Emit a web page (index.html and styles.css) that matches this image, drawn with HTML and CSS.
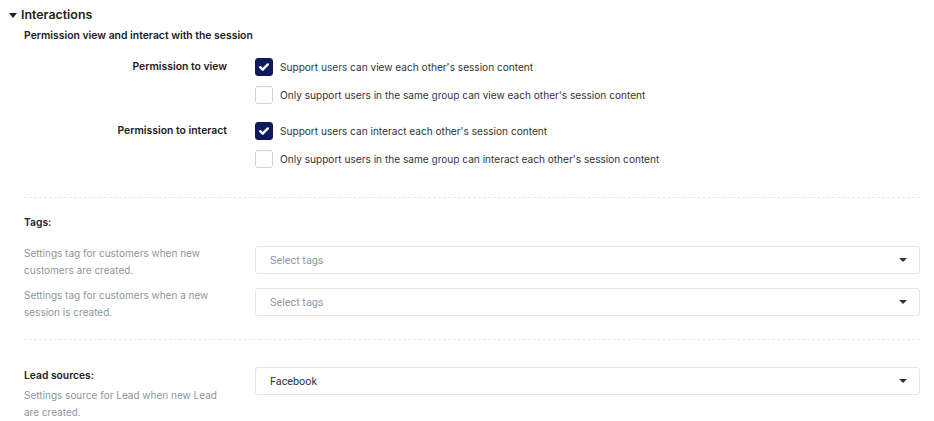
FILE: index.html
```html
<!DOCTYPE html>
<html>
<head>
<meta charset="utf-8">
<link rel="stylesheet" href="styles.css">
</head>
<body>
<div class="page">
  <div class="section-head">
    <svg class="caret" width="8" height="5" viewBox="0 0 8 5"><path d="M0 0h8L4 5z" fill="#222"/></svg>
    <span class="section-title">Interactions</span>
  </div>
  <div class="subtitle">Permission view and interact with the session</div>

  <div class="perm-group">
    <div class="perm-label">Permission to view</div>
    <div class="perm-options">
      <label class="opt"><span class="cb checked"><svg width="10" height="8" viewBox="0 0 10 8"><path d="M1.2 4.2l2.5 2.4L8.8 1.4" fill="none" stroke="#fff" stroke-width="2.4" stroke-linecap="round" stroke-linejoin="round"/></svg></span><span>Support <span class="hl">users</span> can view each other's session content</span></label>
      <label class="opt"><span class="cb"></span><span>Only support users in the same <span class="hl">group</span> can view each other's session content</span></label>
    </div>
  </div>
  <div class="perm-group second">
    <div class="perm-label">Permission to interact</div>
    <div class="perm-options">
      <label class="opt"><span class="cb checked"><svg width="10" height="8" viewBox="0 0 10 8"><path d="M1.2 4.2l2.5 2.4L8.8 1.4" fill="none" stroke="#fff" stroke-width="2.4" stroke-linecap="round" stroke-linejoin="round"/></svg></span><span>Support users can interact each other's session content</span></label>
      <label class="opt"><span class="cb"></span><span>Only support users in the same <span class="hl">group</span> can interact each other's session content</span></label>
    </div>
  </div>

  <div class="divider first-div"></div>

  <div class="block-title tags-title">Tags:</div>
  <div class="field-row">
    <div class="desc">Settings tag for customers when new customers are created.</div>
    <div class="select placeholder"><span>Select tags</span><span class="arrow"></span></div>
  </div>
  <div class="field-row">
    <div class="desc">Settings tag for customers when a new session is created.</div>
    <div class="select placeholder"><span>Select tags</span><span class="arrow"></span></div>
  </div>

  <div class="divider second-div"></div>

  <div class="field-row lead">
    <div class="lead-left">
      <div class="block-title">Lead sources:</div>
      <div class="desc">Settings source for Lead when new Lead are created.</div>
    </div>
    <div class="select"><span>Facebook</span><span class="arrow"></span></div>
  </div>
</div>
</body>
</html>
```

FILE: styles.css
```css
* { box-sizing: border-box; }
html, body { margin: 0; padding: 0; background: #fff; }
body {
  font-family: Inter, "Noto Sans", sans-serif;
  color: #222;
  width: 934px;
  height: 421px;
  overflow: hidden;
}
.page { padding: 5px 14px 0 0; }

.section-head {
  display: flex;
  align-items: center;
  height: 20px;
  padding-left: 9px;
}
.caret { margin-right: 4px; margin-top: 1px; }
.section-title { font-size: 12.4px; font-weight: 600; line-height: 20px; color: #1e1e1e; }

.subtitle {
  margin: 2px 0 0 24px;
  font-size: 10.4px;
  font-weight: 600;
  line-height: 18px;
  color: #222;
}

.perm-group {
  display: grid;
  grid-template-columns: 203px 1fr;
  column-gap: 28px;
  margin: 8px 0 0 24px;
}
.perm-group.second { margin-top: 8px; }
.perm-label {
  text-align: right;
  font-size: 10.4px;
  font-weight: 600;
  line-height: 28px;
  color: #222;
}
.perm-options { display: flex; flex-direction: column; }
.opt {
  display: flex;
  align-items: center;
  height: 28px;
  font-size: 10.1px;
  color: #333;
}
.hl { color: #2b3f7a; }
.cb {
  width: 18px;
  height: 18px;
  border: 1px solid #cfd3d8;
  border-radius: 3px;
  margin-right: 7px;
  display: flex;
  align-items: center;
  justify-content: center;
  flex: none;
  background: #fff;
}
.cb.checked { background: #10195e; border-color: #10195e; }

.divider {
  margin-left: 24px;
  border-top: 1px dashed #e6e8eb;
  height: 0;
}
.first-div { margin-top: 24px; }
.second-div { margin-top: 18px; }

.block-title {
  font-size: 10.3px;
  font-weight: 600;
  line-height: 18px;
  color: #222;
}
.tags-title { margin: 15px 0 0 24px; }

.field-row {
  display: grid;
  grid-template-columns: 203px 1fr;
  column-gap: 28px;
  margin: 14px 0 0 24px;
  min-height: 34px;
}
.field-row + .field-row { margin-top: 8px; }
.field-row .select.placeholder { margin-top: 1px; }
.desc {
  font-size: 10px;
  line-height: 17px;
  color: #8d969e;
}
.select {
  height: 28px;
  border: 1px solid #e3e5e8;
  border-radius: 3px;
  display: flex;
  align-items: center;
  justify-content: space-between;
  padding: 0 12px 0 14px;
  font-family: Roboto, "Liberation Sans", sans-serif;
  font-size: 10.8px;
  color: #333;
}
.select.placeholder { color: #8d99a6; }
.arrow {
  width: 0; height: 0;
  border-left: 4px solid transparent;
  border-right: 4px solid transparent;
  border-top: 4px solid #333;
}

.field-row.lead { margin-top: 26px; }
.lead-left .desc { margin-top: 3px; }
.lead .select { margin-top: 1px; }
```
